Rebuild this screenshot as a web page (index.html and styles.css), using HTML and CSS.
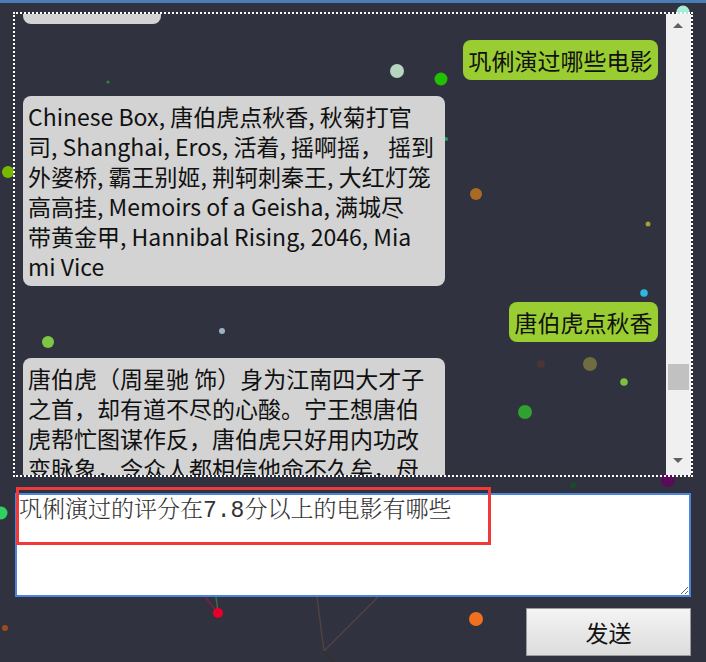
FILE: index.html
```html
<!DOCTYPE html>
<html lang="zh-CN">
<head>
<meta charset="utf-8">
<title>Chat</title>
<link rel="stylesheet" href="styles.css">
</head>
<body>
<svg class="particles" width="706" height="662" viewBox="0 0 706 662" aria-hidden="true">
  <g class="links">
    <line x1="205" y1="597" x2="218" y2="613" stroke="#8a2038"/>
    <line x1="216" y1="597" x2="218" y2="612" stroke="#4a7a40"/>
    <line x1="317" y1="597" x2="324" y2="651" stroke="#5a4540"/>
    <line x1="378" y1="597" x2="324" y2="651" stroke="#5a4540"/>
    <line x1="324" y1="651" x2="333" y2="662" stroke="#3a3020" stroke-width="2.5"/>
  </g>
  <g class="dots">
    <circle cx="683" cy="12" r="6.5" fill="#a9ecd6"/>
    <circle cx="108" cy="82" r="1.6" fill="#2a8a3a"/>
    <circle cx="397" cy="71" r="7" fill="#b6d6c0"/>
    <circle cx="441" cy="79" r="6.5" fill="#22c000"/>
    <circle cx="8" cy="172" r="6" fill="#78b800"/>
    <circle cx="446" cy="139" r="2" fill="#20a060"/>
    <circle cx="476" cy="194" r="6" fill="#a86a24"/>
    <circle cx="648" cy="224" r="2.5" fill="#a0a030"/>
    <circle cx="644" cy="293" r="3.8" fill="#2cb8e0"/>
    <circle cx="222" cy="331" r="3" fill="#9ab4c4"/>
    <circle cx="48" cy="342" r="6" fill="#7cc844"/>
    <circle cx="541" cy="364" r="4" fill="#4a3434"/>
    <circle cx="590" cy="364" r="7" fill="#6e6c40"/>
    <circle cx="624" cy="382" r="3.8" fill="#7cc040"/>
    <circle cx="525" cy="412" r="7" fill="#30a030"/>
    <circle cx="668" cy="480" r="7" fill="#5c0a5c"/>
    <circle cx="573" cy="485" r="3" fill="#1a4a2a"/>
    <circle cx="1" cy="513" r="6.5" fill="#30d060"/>
    <circle cx="218" cy="613" r="5" fill="#e8002a"/>
    <circle cx="5" cy="628" r="3" fill="#a04a20"/>
    <circle cx="476" cy="619" r="7" fill="#f07020"/>
  </g>
</svg>

<div class="topbar"></div>

<main class="app">
  <section class="chat">
    <div class="viewport">
      <div class="messages">
        <div class="bubble bot first">巩俐, 1965年</div>
        <div class="bubble user">巩俐演过哪些电影</div>
        <div class="bubble bot wide">Chinese Box, 唐伯虎点秋香, 秋菊打官<br>司, Shanghai, Eros, 活着, 摇啊摇， 摇到<br>外婆桥, 霸王别姬, 荆轲刺秦王, 大红灯笼<br>高高挂, Memoirs of a Geisha, 满城尽<br>带黄金甲, Hannibal Rising, 2046, Mia<br>mi Vice</div>
        <div class="bubble user">唐伯虎点秋香</div>
        <div class="bubble bot wide">唐伯虎（周星驰 饰）身为江南四大才子之首，却有道不尽的心酸。宁王想唐伯虎帮忙图谋作反，唐伯虎只好用内功改变脉象，令众人都相信他命不久矣，母亲更为他安排了八个老婆，整日无所事事。</div>
      </div>
    </div>
    <div class="scrollbar">
      <div class="sb-btn">
        <svg width="25" height="25" viewBox="0 0 25 25"><polygon points="7,14 17,14 12,9" fill="#606060"/></svg>
      </div>
      <div class="sb-track"><div class="sb-thumb"></div></div>
      <div class="sb-btn">
        <svg width="25" height="25" viewBox="0 0 25 25"><polygon points="7,8 17,8 12,13" fill="#606060"/></svg>
      </div>
    </div>
  </section>

  <textarea class="input">巩俐演过的评分在7.8分以上的电影有哪些</textarea>

  <div class="actions">
    <button class="send" type="button">发送</button>
  </div>
</main>

<div class="annotation"></div>
</body>
</html>
```

FILE: styles.css
```css
html, body {
  margin: 0;
  padding: 0;
}

body {
  width: 706px;
  height: 662px;
  overflow: hidden;
  position: relative;
  background: #30323f;
}

.particles {
  position: absolute;
  left: 0;
  top: 0;
  z-index: 0;
  pointer-events: none;
}

.particles .links line {
  stroke-width: 1.4;
  opacity: 0.85;
}

.particles .dots circle {
  filter: blur(0.4px);
}

.topbar {
  position: relative;
  z-index: 1;
  height: 3px;
  background: #4a7db5;
}

.app {
  position: relative;
  z-index: 1;
  padding: 0 15px;
}

.chat {
  margin: 9px -2px 0;
  height: 465px;
  box-sizing: border-box;
  border: 2px dotted #ffffff;
  display: flex;
}

.viewport {
  flex: 1;
  overflow: hidden;
}

.messages {
  display: flex;
  flex-direction: column;
  gap: 16px;
  padding: 0 8px;
  margin-top: -35px;
}

.bubble {
  font-family: "Noto Sans CJK SC", "Noto Sans", sans-serif;
  font-size: 23px;
  line-height: 30px;
  color: #111111;
  border-radius: 8px;
  padding: 5px;
  word-break: break-all;
  box-sizing: border-box;
}

.bubble.user {
  align-self: flex-end;
  background: #9acd32;
  padding: 5px 5.5px;
}

.bubble.bot {
  align-self: flex-start;
  background: #d3d3d3;
  max-width: 422px;
}

.bubble.first {
  width: 138px;
  padding: 5px 0 10px 5px;
  white-space: nowrap;
  overflow: hidden;
}

.bubble.wide {
  width: 422px;
}

.scrollbar {
  width: 25px;
  flex: none;
  background: #f0f0f0;
  display: flex;
  flex-direction: column;
}

.sb-btn {
  height: 25px;
  flex: none;
}

.sb-btn svg {
  display: block;
}

.sb-track {
  flex: 1;
}

.sb-thumb {
  margin: 325px 2px 0;
  height: 26px;
  background: #c1c1c1;
}

.input {
  display: block;
  box-sizing: border-box;
  width: 100%;
  height: 104px;
  margin: 16px 0 0;
  border: 2px solid #4a84dc;
  padding: 3px 2px;
  font-family: "Liberation Mono", "Noto Serif CJK SC", "Noto Sans CJK SC", monospace;
  font-size: 23px;
  font-weight: 300;
  line-height: 1.2;
  color: #333333;
  background: #ffffff;
  resize: both;
  outline: none;
}

.actions {
  display: flex;
  justify-content: flex-end;
  margin-top: 11px;
}

.send {
  width: 165px;
  height: 48px;
  padding: 0;
  border: 1px solid #9a9a9a;
  background: linear-gradient(#f4f4f4, #dcdcdc);
  font-family: "Noto Sans CJK SC", sans-serif;
  font-size: 23px;
  color: #111111;
}

.annotation {
  position: absolute;
  left: 16px;
  top: 487px;
  width: 475px;
  height: 58px;
  box-sizing: border-box;
  border: 3px solid #f03a3a;
  z-index: 2;
  pointer-events: none;
}
```
